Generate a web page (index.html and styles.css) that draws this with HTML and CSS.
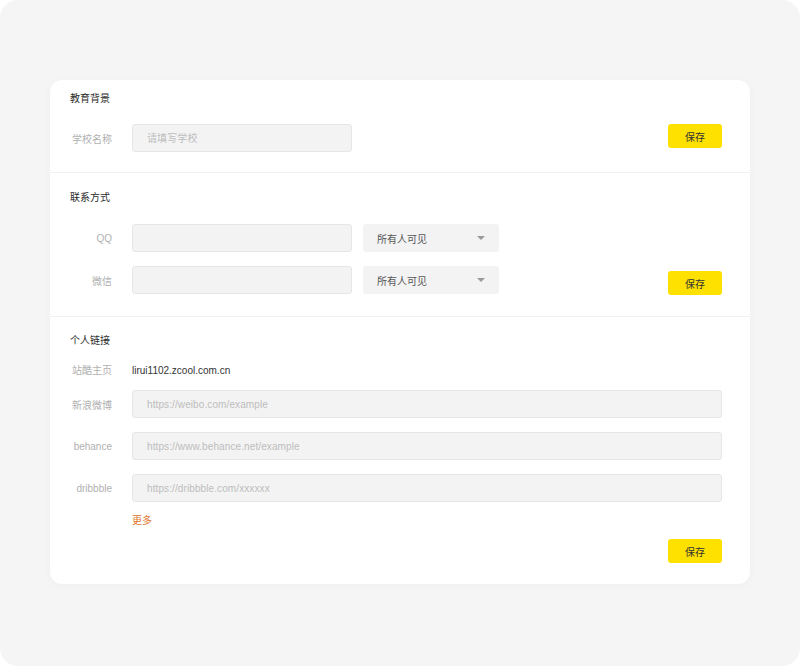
FILE: index.html
```html
<!DOCTYPE html>
<html lang="zh-CN">
<head>
<meta charset="utf-8">
<title>资料设置</title>
<link rel="stylesheet" href="styles.css">
</head>
<body>
<div class="frame">
  <div class="card">
    <section class="section sec-edu">
      <h3 class="title">教育背景</h3>
      <div class="body">
        <div class="rows">
          <div class="row">
            <label class="label">学校名称</label>
            <input class="input w220" type="text" placeholder="请填写学校">
          </div>
        </div>
        <button class="btn btn-top">保存</button>
      </div>
    </section>

    <section class="section sec-contact">
      <h3 class="title">联系方式</h3>
      <div class="body">
        <div class="rows">
          <div class="row">
            <label class="label">QQ</label>
            <input class="input w220" type="text">
            <div class="select"><span>所有人可见</span><i class="caret"></i></div>
          </div>
          <div class="row">
            <label class="label">微信</label>
            <input class="input w220" type="text">
            <div class="select"><span>所有人可见</span><i class="caret"></i></div>
          </div>
        </div>
        <button class="btn btn-bottom">保存</button>
      </div>
    </section>

    <section class="section sec-links">
      <h3 class="title">个人链接</h3>
      <div class="rows full">
        <div class="row row-text">
          <span class="label">站酷主页</span>
          <span class="value">lirui1102.zcool.com.cn</span>
        </div>
        <div class="row row-first">
          <label class="label">新浪微博</label>
          <input class="input grow" type="text" placeholder="https://weibo.com/example">
        </div>
        <div class="row">
          <label class="label">behance</label>
          <input class="input grow" type="text" placeholder="https://www.behance.net/example">
        </div>
        <div class="row">
          <label class="label">dribbble</label>
          <input class="input grow" type="text" placeholder="https://dribbble.com/xxxxxx">
        </div>
        <div class="row row-more">
          <span class="label"></span>
          <a class="more" href="#">更多</a>
        </div>
      </div>
      <div class="actions">
        <button class="btn">保存</button>
      </div>
    </section>
  </div>
</div>
</body>
</html>
```

FILE: styles.css
```css
* {
  box-sizing: border-box;
}

html {
  background: #ffffff;
}

body {
  margin: 0;
  font-family: "Liberation Sans", "Noto Sans CJK SC", sans-serif;
  font-size: 10px;
  color: #333333;
}

.frame {
  width: 800px;
  height: 666px;
  background: #f5f5f5;
  border-radius: 18px;
  padding-top: 80px;
  overflow: hidden;
}

.card {
  width: 700px;
  margin: 0 auto;
  background: #ffffff;
  border-radius: 12px;
  box-shadow: 0 1px 8px rgba(0, 0, 0, 0.03);
}

.section {
  padding: 0 28px 0 20px;
}

.section + .section {
  border-top: 1px solid #f0f0f0;
}

.sec-edu {
  padding-top: 12px;
  padding-bottom: 20px;
}

.sec-contact {
  padding-top: 18px;
  padding-bottom: 22px;
}

.sec-links {
  padding-top: 17px;
  padding-bottom: 21px;
}

.title {
  margin: 0 0 18px;
  font-size: 10px;
  line-height: 14px;
  font-weight: 400;
  color: #2b2b2b;
}

.sec-contact .title {
  margin-bottom: 19px;
}

.sec-links .title {
  margin-bottom: 16px;
}

.body {
  display: flex;
  justify-content: space-between;
}

.rows {
  display: flex;
  flex-direction: column;
  gap: 14px;
}

.row {
  display: flex;
  align-items: center;
}

.row-text {
  height: 14px;
  line-height: 14px;
  margin-bottom: -2px;
}

.row-more {
  height: 14px;
  margin-top: -2px;
}

.label {
  width: 42px;
  margin-right: 20px;
  text-align: right;
  color: #b0b0b0;
  font-size: 10px;
  flex: none;
}

.value {
  color: #333333;
}

.input {
  height: 28px;
  padding: 0 14px;
  background: #f3f3f3;
  border: 1px solid #e6e6e6;
  border-radius: 3px;
  font-family: inherit;
  font-size: 10px;
  color: #333333;
  outline: none;
}

.input::placeholder {
  color: #bdbdbd;
  letter-spacing: 0.1px;
}

.w220 {
  width: 220px;
}

.grow {
  flex: 1;
  min-width: 0;
}

.select {
  width: 136px;
  height: 28px;
  margin-left: 11px;
  padding: 0 14px;
  background: #f3f3f3;
  border-radius: 3px;
  display: flex;
  align-items: center;
  justify-content: space-between;
  color: #555555;
}

.caret {
  width: 0;
  height: 0;
  border-left: 4px solid transparent;
  border-right: 4px solid transparent;
  border-top: 4px solid #9a9a9a;
}

.more {
  color: #e0762b;
  text-decoration: none;
  line-height: 14px;
}

.btn {
  width: 54px;
  height: 24px;
  padding: 0;
  background: #ffe100;
  border: none;
  border-radius: 3px;
  font-family: inherit;
  font-size: 10px;
  color: #333333;
  cursor: pointer;
  flex: none;
}

.btn-top {
  align-self: flex-start;
}

.btn-bottom {
  align-self: flex-end;
  margin-bottom: -1px;
}

.actions {
  display: flex;
  justify-content: flex-end;
  margin-top: 11px;
}
```
